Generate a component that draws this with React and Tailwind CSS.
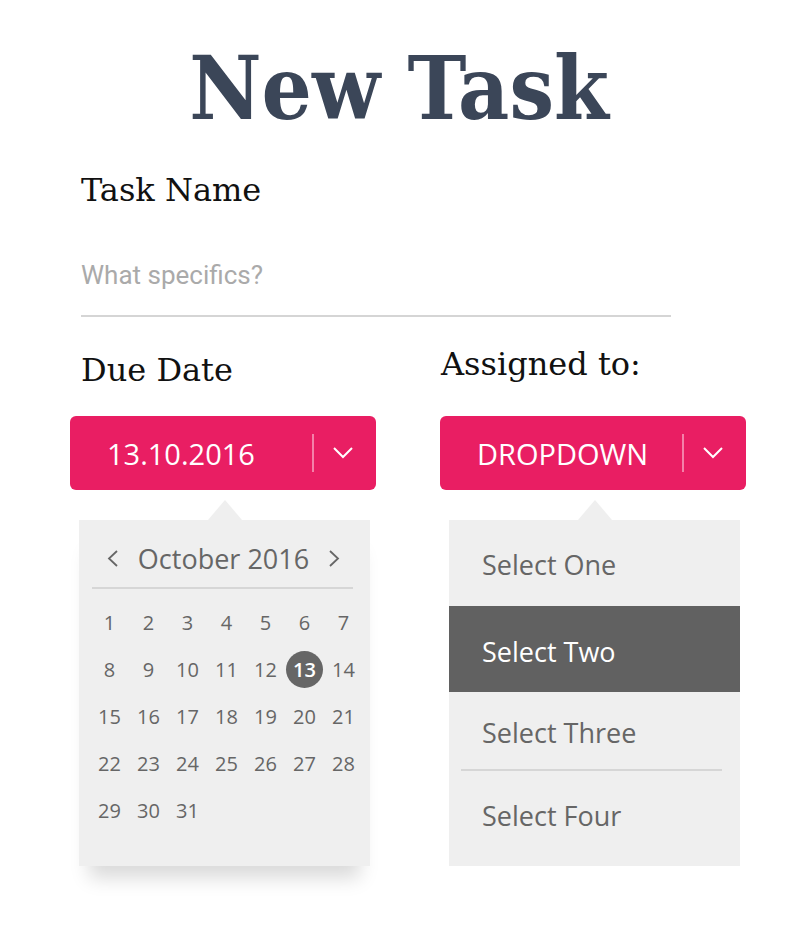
import React, { useState } from 'react';

const slab = { fontFamily: "'DejaVu Serif Condensed', 'DejaVu Serif', serif" };
const serif = { fontFamily: "'DejaVu Serif', serif" };

const Chevron = ({ className }) => (
  <svg className={className} width="20" height="12" viewBox="0 0 20 12" fill="none">
    <polyline points="1,1 10,10 19,1" stroke="currentColor" strokeWidth="2" />
  </svg>
);

const PinkSelect = ({ label }) => (
  <div className="flex items-center h-[74px] w-[306px] rounded-[6px] bg-[#e91e63] text-white pl-[37px]">
    <span className="w-[205px] text-[29px] leading-none font-['Open_Sans',sans-serif]">{label}</span>
    <span className="w-[2px] h-[38px] bg-[#f481a9]" />
    <span className="w-[58px] flex justify-center">
      <Chevron className="text-white" />
    </span>
  </div>
);

const Arrow = () => (
  <div className="flex justify-center h-[20px]">
    <div className="w-0 h-0 border-l-[17px] border-r-[17px] border-b-[20px] border-l-transparent border-r-transparent border-b-[#efefef]" />
  </div>
);

const days = Array.from({ length: 31 }, (_, i) => i + 1);

const Calendar = () => {
  const [picked, setPicked] = useState(13);
  return (
    <div className="ml-[9px] w-[291px]">
      <Arrow />
      <div className="bg-[#efefef] h-[346px] pt-[28px] text-[#666] font-['Open_Sans',sans-serif] shadow-[0_22px_18px_-10px_rgba(0,0,0,0.15)]">
        <div className="flex items-center justify-center gap-[19px] h-[20px] pr-[2px]">
          <svg width="12" height="17" viewBox="0 0 12 17" fill="none">
            <polyline points="10,1 2,8.5 10,16" stroke="#666" strokeWidth="1.8" />
          </svg>
          <span className="text-[27px] leading-none">October 2016</span>
          <svg width="12" height="17" viewBox="0 0 12 17" fill="none">
            <polyline points="2,1 10,8.5 2,16" stroke="#666" strokeWidth="1.8" />
          </svg>
        </div>
        <div className="ml-[13px] mr-[17px] mt-[19px] h-[2px] bg-[#d6d6d6]" />
        <div className="grid grid-cols-7 w-[273px] ml-[11px] mt-[10px]">
          {days.map((d) => (
            <div key={d} className="h-[47px] flex items-center justify-center">
              <button
                onClick={() => setPicked(d)}
                className={`w-[37px] h-[37px] rounded-full flex items-center justify-center text-[20px] leading-none ${picked === d ? 'bg-[#666] text-white font-semibold' : ''}`}
              >
                {d}
              </button>
            </div>
          ))}
        </div>
      </div>
    </div>
  );
};

const options = ['Select One', 'Select Two', 'Select Three', 'Select Four'];

const OptionList = () => {
  const [selected, setSelected] = useState('Select Two');
  const heights = ['h-[86px] pt-[4px]', 'h-[86px] pt-[6px]', 'h-[78px] pt-[4px]', 'h-[95px] pb-[6px]'];
  return (
    <div className="ml-[9px] w-[291px]">
      <Arrow />
      <div className="bg-[#efefef] h-[346px] flex flex-col font-['Open_Sans',sans-serif] text-[27px]">
        {options.map((o, i) => (
          <React.Fragment key={o}>
            {i === 3 && <div className="ml-[12px] mr-[18px] h-[2px] bg-[#d6d6d6]" />}
            <button
              onClick={() => setSelected(o)}
              className={`${heights[i]} flex items-center pl-[33px] text-left leading-none ${selected === o ? 'bg-[#616161] text-white' : 'text-[#666]'}`}
            >
              {o}
            </button>
          </React.Fragment>
        ))}
      </div>
    </div>
  );
};

export default function App() {
  return (
    <div className="bg-white min-h-screen w-[798px] pt-[44px]">
      <h1 style={slab} className="text-center text-[88px] leading-none font-bold text-[#3b4658]">
        New Task
      </h1>

      <div className="pl-[81px] mt-[42px]">
        <h2 style={serif} className="text-[32px] leading-none text-[#111]">Task Name</h2>
        <input
          placeholder="What specifics?"
          className="mt-[54px] w-[590px] pb-[25px] border-b-2 border-[#d5d5d5] text-[26px] leading-none font-['Roboto',sans-serif] text-[#333] placeholder:text-[#aaa] outline-none"
        />
      </div>

      <div className="flex gap-[64px] pl-[70px] mt-[31px]">
        <div className="flex flex-col">
          <h2 style={serif} className="ml-[11px] mt-[6px] text-[32px] leading-none text-[#111]">Due Date</h2>
          <div className="mt-[30px]">
            <PinkSelect label="13.10.2016" />
          </div>
          <div className="mt-[10px]">
            <Calendar />
          </div>
        </div>
        <div className="flex flex-col">
          <h2 style={serif} className="ml-[1px] text-[32px] leading-none text-[#111]">Assigned to:</h2>
          <div className="mt-[36px]">
            <PinkSelect label="DROPDOWN" />
          </div>
          <div className="mt-[10px]">
            <OptionList />
          </div>
        </div>
      </div>
    </div>
  );
}
